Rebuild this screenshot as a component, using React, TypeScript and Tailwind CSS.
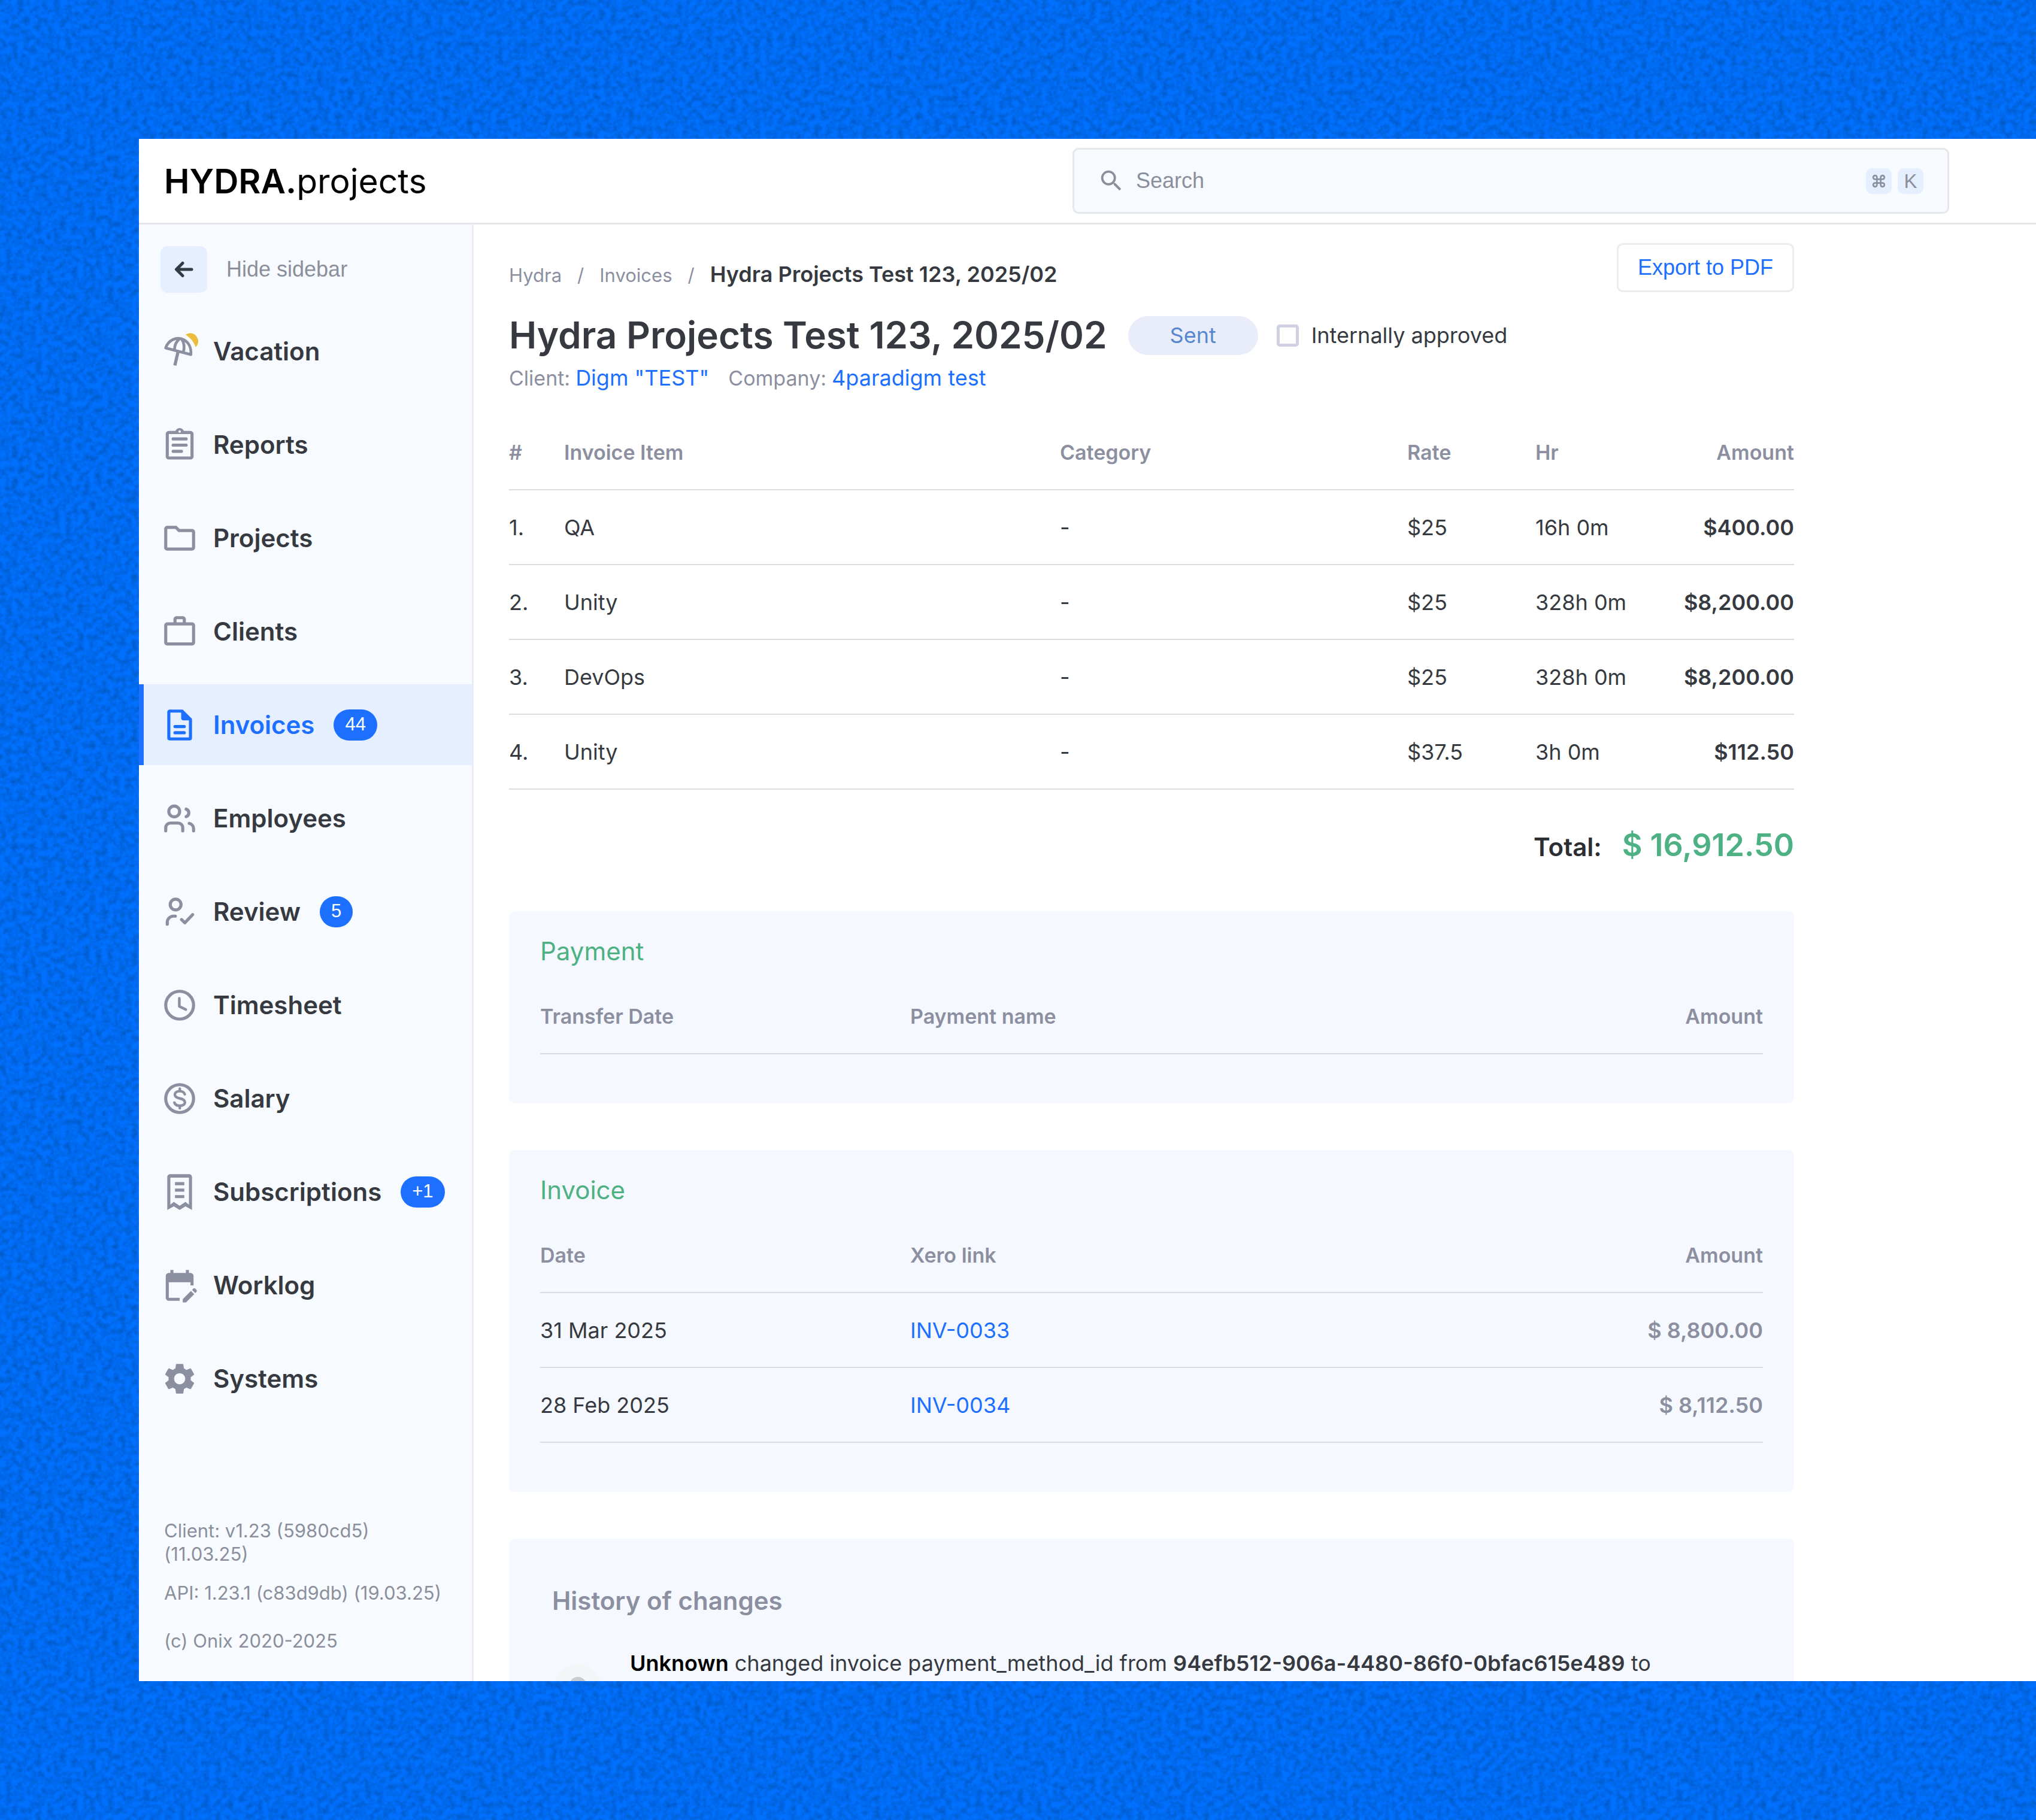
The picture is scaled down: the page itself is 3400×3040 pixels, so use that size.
import type { ReactNode } from "react";
import { MdEditCalendar, MdOutlineFolder, MdSearch, MdSettings, MdWorkOutline } from "react-icons/md";
import { Command } from "lucide-react";

const iconBox = "size-[62px] shrink-0 overflow-visible";

function Stroke({ children }: { children: ReactNode }) {
  return (
    <svg viewBox="0 0 24 24" className={iconBox} fill="none" stroke="currentColor" strokeWidth="2" strokeLinecap="round" strokeLinejoin="round" aria-hidden="true">
      {children}
    </svg>
  );
}

function VacationIcon() {
  return (
    <svg viewBox="27 48 186 186" className={iconBox} fill="none" aria-hidden="true">
      <g stroke="currentColor" strokeWidth="14" strokeLinejoin="round">
        <path d="M50 124C62 84 106 64 141 83c26 14 38 42 35 74z" />
        <path d="M120 77C102 92 94 112 94 134M130 79c14 20 15 44 8 67" />
        <path d="M112 142 96 211" strokeWidth="16" />
      </g>
      <path d="M150 58c15-13 41-11 54 7 14 19 12 40-4 54-8-24-27-48-50-61z" fill="#ecbd3c" />
    </svg>
  );
}

function ReportsIcon() {
  return (
    <Stroke>
      <rect x="4" y="4" width="16" height="16.5" rx="1" />
      <path d="M7.8 8.2h8.4M7.8 12.2h8.4M7.8 16.2h5.4" />
      <path d="M9.2 3.6a2.8 2.4 0 0 1 5.6 0z" fill="currentColor" stroke="none" />
      <circle cx="12" cy="3.4" r="0.8" fill="#f7fbff" stroke="none" />
    </Stroke>
  );
}

function InvoicesIcon() {
  return (
    <Stroke>
      <path d="M14 2H5.5C4.7 2 4 2.7 4 3.5v17c0 .8.7 1.5 1.5 1.5h13c.8 0 1.5-.7 1.5-1.5V8zM6 20V4h7v3.6c0 .8.6 1.4 1.4 1.4H18v11z" fill="currentColor" fillRule="evenodd" stroke="none" />
      <path d="M9 13h6M9 17h6" />
    </Stroke>
  );
}

function EmployeesIcon() {
  return (
    <Stroke>
      <circle cx="8.5" cy="7.5" r="3.5" />
      <path d="M3 20v-2a3 3 0 0 1 3-3h5a3 3 0 0 1 3 3v2" />
      <path d="M16.2 6a2.6 2.6 0 0 1 0 4.9M18.2 15.2A3.6 3.6 0 0 1 21 18.6V20" />
    </Stroke>
  );
}

function ReviewIcon() {
  return (
    <Stroke>
      <circle cx="9.4" cy="7.3" r="3.5" />
      <path d="M4 20v-1.2A4 4 0 0 1 8 14.8h1.2" />
      <path d="m13.2 17 2.2 2.1 5-5.3" />
    </Stroke>
  );
}

function TimesheetIcon() {
  return (
    <Stroke>
      <circle cx="12" cy="12" r="9" />
      <path d="M11.8 7.5v5.3l4.2 2" strokeWidth="1.7" />
    </Stroke>
  );
}

function SalaryIcon() {
  return (
    <Stroke>
      <circle cx="12" cy="12" r="9" />
      <path d="M15.3 9.2c-.3-1.2-1.6-2-3.2-2-1.9 0-3.2.9-3.2 2.3 0 1.5 1.300 2 3.200 2.400s3.300 1 3.300 2.500c0 1.300-1.400 2.200-3.300 2.200-1.700 0-3.100-.8-3.500-2M12.100 5.600v1.200M12.100 17v1.200" strokeWidth="1.7" />
    </Stroke>
  );
}

function SubscriptionsIcon() {
  return (
    <svg viewBox="0 0 24 24" className="h-[72px] w-[62px] shrink-0" fill="currentColor" aria-hidden="true">
      <path d="M4 23.6V2.5c0-1.2.8-2 2-2h12c1.2 0 2 .8 2 2v21.100l-4.200-2.300L12 23.600l-3.800-2.300zM6 20.200l2.200-1.800 3.800 2.500 3.800-2.500 2.200 1.800V2.700H6z" fillRule="evenodd" />
      <path d="M9 5.600h6v2H9zM9 9.800h6v2H9zM9 14h6v2H9z" />
    </svg>
  );
}

type NavItem = { label: string; icon: ReactNode; badge?: string; active?: boolean };

const navItems: NavItem[] = [
  { label: "Vacation", icon: <VacationIcon /> },
  { label: "Reports", icon: <ReportsIcon /> },
  { label: "Projects", icon: <MdOutlineFolder className={iconBox} /> },
  { label: "Clients", icon: <MdWorkOutline className={iconBox} /> },
  { label: "Invoices", icon: <InvoicesIcon />, badge: "44", active: true },
  { label: "Employees", icon: <EmployeesIcon /> },
  { label: "Review", icon: <ReviewIcon />, badge: "5" },
  { label: "Timesheet", icon: <TimesheetIcon /> },
  { label: "Salary", icon: <SalaryIcon /> },
  { label: "Subscriptions", icon: <SubscriptionsIcon />, badge: "+1" },
  { label: "Worklog", icon: <MdEditCalendar className={iconBox} /> },
  { label: "Systems", icon: <MdSettings className={iconBox} /> },
];

function Header() {
  return (
    <header className="flex h-[143px] shrink-0 items-center justify-between border-b-3 border-[#e4e6ea] pl-[42px] pr-[145px]">
      <a href="#home" className="text-[57px] leading-none text-black">
        <span className="font-semibold">HYDRA.</span>projects
      </a>
      <label className="flex h-[110px] w-[1464px] items-center rounded-[10px] border-3 border-[#e4e8ea] bg-[#f7fbff] pl-[39px] pr-[40px] font-['Liberation_Sans',sans-serif] text-[#8b8f9b]">
        <MdSearch className="size-[46px] shrink-0" />
        <input
          type="search"
          aria-label="Search"
          placeholder="Search"
          className="ml-[18px] min-w-0 flex-1 bg-transparent text-[36px] outline-none placeholder:text-[#8b8f9b]"
        />
        <span className="flex gap-[10px] text-[33px] leading-none">
          <kbd className="flex size-[43px] items-center justify-center rounded-[10px] bg-[#e6efff]">
            <Command className="size-[25px]" strokeWidth={2.5} />
          </kbd>
          <kbd className="flex size-[43px] items-center justify-center rounded-[10px] bg-[#e6efff] font-['Liberation_Sans',sans-serif]">K</kbd>
        </span>
      </label>
    </header>
  );
}

function Sidebar() {
  return (
    <aside className="flex w-[559px] shrink-0 flex-col border-r-3 border-[#e9ebf8] bg-[#f7fbff]">
      <button type="button" className="ml-[36px] mt-[36px] flex items-center gap-[32px] self-start font-['Liberation_Sans',sans-serif] text-[36px] text-[#8b8f9b]">
        <span className="flex size-[78px] items-center justify-center rounded-[12px] bg-[#e6efff] text-[#343a44]">
          <svg viewBox="0 0 32 28" className="h-[28px] w-[32px]" fill="none" stroke="currentColor" strokeWidth="5" strokeLinecap="round" strokeLinejoin="round" aria-hidden="true">
            <path d="M29 14H4M14 3.5 3.5 14 14 24.5" />
          </svg>
        </span>
        Hide sidebar
      </button>
      <nav className="mt-[30px] flex flex-col gap-[21px]">
        {navItems.map((item) => (
          <a
            key={item.label}
            href={"#" + item.label.toLowerCase()}
            aria-current={item.active ? "page" : undefined}
            className={
              item.active
                ? "flex h-[135px] items-center border-l-8 border-[#1d70ff] bg-[#e6efff] pl-[29px] text-[#1d70ff]"
                : "flex h-[135px] items-center border-l-8 border-transparent pl-[29px] text-[#8b8fa0]"
            }
          >
            {item.icon}
            <span className={item.active ? "ml-[25px] text-[42px] font-semibold" : "ml-[25px] text-[42px] font-semibold text-[#363a40]"}>
              {item.label}
            </span>
            {item.badge && (
              <span className="ml-[32px] flex h-[52px] items-center rounded-full bg-[#1d70ff] px-[19px] font-['Liberation_Sans',sans-serif] text-[31px] text-white">
                {item.badge}
              </span>
            )}
          </a>
        ))}
      </nav>
      <footer className="mt-auto pb-[48px] pl-[42px] pr-[40px] text-[31px] leading-[39px] text-[#8b8f9b]">
        <p>Client: v1.23 (5980cd5) (11.03.25)</p>
        <p className="mt-[26px]">API: 1.23.1 (c83d9db) (19.03.25)</p>
        <p className="mt-[41px]">(c) Onix 2020-2025</p>
      </footer>
    </aside>
  );
}

const headRow = "h-[125px] border-b-2 border-[#d9dce1] text-left text-[34px] text-[#8b8fa0] [&>th]:font-semibold";
const bodyRow = "h-[125px] border-b-2 border-[#d9dce1] text-[36px] text-[#363a40]";
const cardStyle = "rounded-[10px] bg-[#f5f9ff]";
const cardTitle = "mb-[20px] text-[42px] leading-[52px] text-[#4db183]";

const invoiceItems = [
  ["1.", "QA", "-", "$25", "16h 0m", "$400.00"],
  ["2.", "Unity", "-", "$25", "328h 0m", "$8,200.00"],
  ["3.", "DevOps", "-", "$25", "328h 0m", "$8,200.00"],
  ["4.", "Unity", "-", "$37.5", "3h 0m", "$112.50"],
];

const xeroInvoices = [
  ["31 Mar 2025", "INV-0033", "$ 8,800.00"],
  ["28 Feb 2025", "INV-0034", "$ 8,112.50"],
];

function PageHead() {
  return (
    <div>
      <div className="flex items-start justify-between">
        <nav aria-label="Breadcrumb" className="mt-[28px] flex items-baseline gap-[26px] text-[31px] leading-[48px] text-[#8b8fa0]">
          <a href="#hydra">Hydra</a>
          <span>/</span>
          <a href="#invoices">Invoices</a>
          <span>/</span>
          <span className="text-[36px] font-semibold text-[#363a40]">Hydra Projects Test 123, 2025/02</span>
        </nav>
        <button type="button" className="h-[82px] rounded-[10px] border-3 border-[#eaecef] px-[32px] font-['Liberation_Sans',sans-serif] text-[36px] text-[#1d70ff]">
          Export to PDF
        </button>
      </div>
      <div className="mt-[32px] flex items-center">
        <h1 className="text-[62px] font-semibold leading-[80px] text-[#363a40]">Hydra Projects Test 123, 2025/02</h1>
        <span className="ml-[35px] flex h-[65px] w-[217px] items-center justify-center rounded-full bg-[#e9edf9] text-[36px] text-[#5688cf]">Sent</span>
        <label className="ml-[31px] flex items-center gap-[21px] text-[36px] text-[#363a40]">
          <input type="checkbox" className="size-[37px] appearance-none rounded-[5px] border-5 border-[#cfd1e3] bg-white checked:bg-[#1d70ff]" />
          Internally approved
        </label>
      </div>
      <p className="mt-[5px] flex items-baseline text-[34px] leading-[52px] text-[#8b8fa0]">
        Client:
        <a href="#client" className="ml-[9px] text-[36px] text-[#1d70ff]">Digm "TEST"</a>
        <span className="ml-[32px]">Company:</span>
        <a href="#company" className="ml-[9px] text-[36px] text-[#1d70ff]">4paradigm test</a>
      </p>
    </div>
  );
}

function ItemsTable() {
  return (
    <table className="mt-[35px] w-full table-fixed border-collapse">
      <colgroup>
        <col className="w-[92px]" />
        <col className="w-[828px]" />
        <col className="w-[580px]" />
        <col className="w-[214px]" />
        <col className="w-[214px]" />
        <col />
      </colgroup>
      <thead>
        <tr className={headRow}>
          <th>#</th>
          <th>Invoice Item</th>
          <th>Category</th>
          <th>Rate</th>
          <th>Hr</th>
          <th className="text-right">Amount</th>
        </tr>
      </thead>
      <tbody>
        {invoiceItems.map((row) => (
          <tr key={row[0]} className={bodyRow}>
            {row.map((cell, i) => (
              <td key={i} className={i === 5 ? "text-right font-semibold" : ""}>{cell}</td>
            ))}
          </tr>
        ))}
      </tbody>
    </table>
  );
}

function CardTable({ heads, children }: { heads: string[]; children?: ReactNode }) {
  return (
    <table className="w-full table-fixed border-collapse">
      <colgroup>
        <col className="w-[618px]" />
        <col />
        <col className="w-[400px]" />
      </colgroup>
      <thead>
        <tr className={headRow}>
          <th>{heads[0]}</th>
          <th>{heads[1]}</th>
          <th className="text-right">{heads[2]}</th>
        </tr>
      </thead>
      <tbody>{children}</tbody>
    </table>
  );
}

function Backdrop() {
  return (
    <svg className="absolute inset-0 size-full" aria-hidden="true">
      <filter id="grain" x="0" y="0" width="100%" height="100%" colorInterpolationFilters="sRGB">
        <feTurbulence type="fractalNoise" baseFrequency="0.1" numOctaves="4" seed="4" />
        <feColorMatrix values="0 0 0 0 0  0 0 0 0 0.33  0 0 0 0 0.72  1.5 0 0 0 -0.52" />
      </filter>
      <rect width="100%" height="100%" filter="url(#grain)" />
    </svg>
  );
}

export default function App() {
  return (
    <div className="relative flex h-screen flex-col overflow-hidden bg-[#0070ff] py-[232px] pl-[232px] font-['Inter',sans-serif]">
      <Backdrop />
      <div className="relative flex min-h-0 flex-1 flex-col overflow-hidden bg-white">
        <Header />
        <div className="flex min-h-0 flex-1">
          <Sidebar />
          <main className="min-w-0 flex-1 overflow-hidden pl-[59px] pt-[31px]">
            <div className="max-w-[2146px]">
              <PageHead />
              <ItemsTable />
              <p className="mt-[58px] flex items-baseline justify-end gap-[34px] font-semibold leading-[70px]">
                <span className="text-[42px] text-[#2c2e33]">Total:</span>
                <span className="text-[52px] text-[#4db183]">$ 16,912.50</span>
              </p>

              <section className={`mt-[72px] px-[52px] pb-[82px] pt-[41px] ${cardStyle}`}>
                <h2 className={cardTitle}>Payment</h2>
                <CardTable heads={["Transfer Date", "Payment name", "Amount"]} />
              </section>

              <section className={`mt-[78px] px-[52px] pb-[82px] pt-[41px] ${cardStyle}`}>
                <h2 className={cardTitle}>Invoice</h2>
                <CardTable heads={["Date", "Xero link", "Amount"]}>
                  {xeroInvoices.map(([date, link, amount]) => (
                    <tr key={link} className={bodyRow}>
                      <td>{date}</td>
                      <td><a href={"#" + link} className="text-[#1d70ff]">{link}</a></td>
                      <td className="text-right font-semibold text-[#8b8fa0]">{amount}</td>
                    </tr>
                  ))}
                </CardTable>
              </section>

              <section className={`mt-[78px] px-[72px] pb-[83px] pt-[78px] ${cardStyle}`}>
                <h2 className="text-[42px] font-semibold leading-[52px] text-[#8b8fa0]">History of changes</h2>
                <div className="mt-[52px] flex gap-[48px]">
                  <svg viewBox="0 0 78 78" className="ml-[4px] mt-[28px] size-[78px] shrink-0" aria-hidden="true">
                    <circle cx="39" cy="39" r="39" fill="#f4f5f7" />
                    <circle cx="39" cy="35" r="14" fill="#c9cbd0" />
                    <path d="M14 68a25 18 0 0 1 50 0 39 39 0 0 1-50 0z" fill="#c9cbd0" />
                  </svg>
                  <p className="text-[36px] leading-[52px] text-[#363a40]">
                    <strong className="font-semibold text-black">Unknown</strong> changed invoice payment_method_id from{" "}
                    <strong className="font-semibold">94efb512-906a-4480-86f0-0bfac615e489</strong> to
                  </p>
                </div>
              </section>
            </div>
          </main>
        </div>
      </div>
    </div>
  );
}
